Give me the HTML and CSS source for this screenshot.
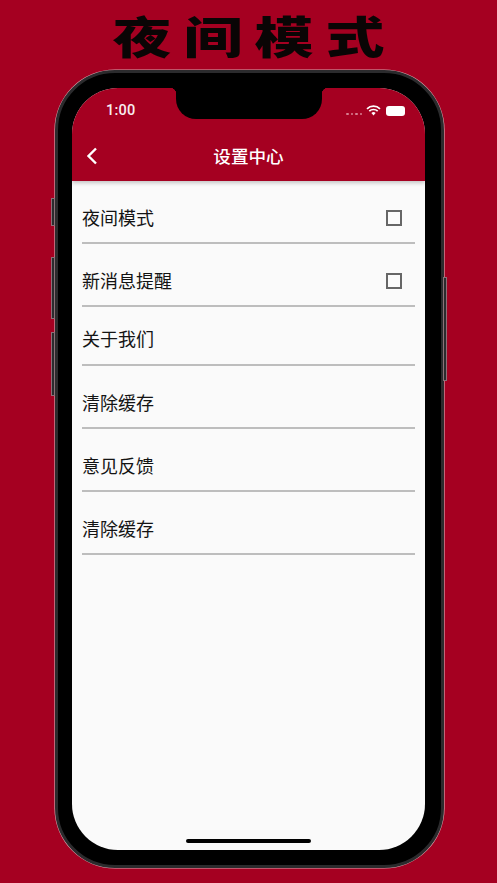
FILE: index.html
```html
<!DOCTYPE html>
<html lang="zh-CN">
<head>
<meta charset="utf-8">
<title>夜间模式</title>
<link rel="stylesheet" href="styles.css">
</head>
<body>
<div class="headline"><h1 class="headline-text">夜间模式</h1></div>
<div class="phone">
  <span class="btn btn-mute"></span>
  <span class="btn btn-up"></span>
  <span class="btn btn-down"></span>
  <span class="btn btn-power"></span>
  <div class="screen">
    <div class="notch"></div>
    <header class="appbar">
      <div class="status">
        <span class="time">1:00</span>
        <span class="status-right">
          <span class="dots"><i></i><i></i><i></i><i></i></span>
          <svg class="wifi" width="15" height="11" viewBox="0 0 15 11"><path d="M1 3.9a9.2 9.2 0 0 1 13 0M3.3 6.2a6 6 0 0 1 8.4 0" fill="none" stroke="#fff" stroke-width="1.7"/><path d="M5.4 8a3 3 0 0 1 4.2 0L7.5 10.4z" fill="#fff"/></svg>
          <span class="battery"></span>
        </span>
      </div>
      <div class="nav">
        <svg class="back" width="12" height="18" viewBox="0 0 12 18"><path d="M10 1.5 2.5 9l7.5 7.5" fill="none" stroke="#fff" stroke-width="2.4"/></svg>
        <span class="title">设置中心</span>
      </div>
    </header>
    <ul class="list">
      <li class="row tall"><span>夜间模式</span><span class="check"></span></li>
      <li class="row tall"><span>新消息提醒</span><span class="check"></span></li>
      <li class="row short"><span>关于我们</span></li>
      <li class="row tall"><span>清除缓存</span></li>
      <li class="row tall"><span>意见反馈</span></li>
      <li class="row tall"><span>清除缓存</span></li>
    </ul>
    <div class="home"></div>
  </div>
</div>
</body>
</html>
```
FILE: styles.css
```css
* { box-sizing: border-box; }
html, body { margin: 0; padding: 0; }
body {
  width: 497px;
  height: 883px;
  overflow: hidden;
  background: #a50021;
  font-family: "Noto Sans CJK SC", "Noto Sans", sans-serif;
}
.headline {
  height: 70px;
  padding-top: 6px;
  display: flex;
  justify-content: center;
}
.headline-text {
  margin: 0;
  height: 58px;
  font-size: 44px;
  line-height: 58px;
  letter-spacing: 9px;
  padding-left: 9px;
  font-weight: 900;
  color: #0a0505;
  transform: scaleX(1.34);
}
.phone {
  position: relative;
  width: 389px;
  height: 798px;
  margin-left: 55px;
  padding: 18px 17px 18px 17px;
  background: #000;
  border-radius: 60px;
  border: 3px solid #2b2b2d;
  box-shadow: 0 0 0 .6px #d9a9b2;
}
.btn {
  position: absolute;
  width: 4px;
  background: #2b2b2d;
  border: 1px solid #8d7078;
}
.btn-mute { left: -7px; top: 125px; height: 28px; }
.btn-up { left: -7px; top: 184px; height: 62px; }
.btn-down { left: -7px; top: 259px; height: 64px; }
.btn-power { right: -6px; top: 204px; height: 104px; }
.screen {
  position: relative;
  width: 353px;
  height: 762px;
  margin: -3px 0 0 -3px;
  border-radius: 46px;
  overflow: hidden;
  background: #fafafa;
}
.notch {
  position: absolute;
  z-index: 2;
  left: 104px;
  top: 0;
  width: 146px;
  height: 31px;
  background: #000;
  border-radius: 0 0 20px 20px;
}
.notch::before,
.notch::after {
  content: "";
  position: absolute;
  top: 0;
  width: 6px;
  height: 6px;
}
.notch::before { left: -6px; background: radial-gradient(circle at 0 100%, transparent 6px, #000 6.5px); }
.notch::after { right: -6px; background: radial-gradient(circle at 100% 100%, transparent 6px, #000 6.5px); }
.appbar {
  height: 93px;
  background: #a50021;
  box-shadow: 0 2px 4px rgba(0, 0, 0, .22);
  position: relative;
}
.status {
  height: 48px;
  padding: 12px 20px 0 34px;
  display: flex;
  justify-content: space-between;
  align-items: flex-start;
  color: #f8eef0;
}
.time { font-family: Roboto, sans-serif; font-size: 14.5px; line-height: 21px; font-weight: 500; letter-spacing: .2px; }
.status-right { display: flex; align-items: center; gap: 4px; height: 20px; }
.dots { display: flex; gap: 2px; margin-top: 8px; }
.dots i { width: 2.5px; height: 2.5px; border-radius: 50%; background: #d77f90; }
.wifi { margin-top: 0; }
.battery { width: 19px; height: 10px; margin-top: 1px; background: #fff; border-radius: 3px; margin-left: 1px; }
.nav {
  position: relative;
  height: 45px;
  display: flex;
  align-items: flex-start;
  justify-content: center;
}
.back { position: absolute; left: 14px; top: 11px; }
.title {
  color: #fff;
  font-size: 17.6px;
  line-height: 40px;
  font-weight: 500;
}
.list { list-style: none; margin: 0; padding: 0 10px; }
.row {
  display: flex;
  justify-content: space-between;
  align-items: center;
  border-bottom: 2px solid #bdbdbd;
  font-size: 18px;
  color: #141414;
}
.tall { height: 63px; padding-top: 11px; }
.short { height: 59px; padding-top: 5px; }
.check {
  width: 16px;
  height: 16px;
  border: 2px solid #666;
  margin: 2px 13px 0 0;
}
.home {
  position: absolute;
  left: 114px;
  bottom: 7px;
  width: 125px;
  height: 4px;
  border-radius: 2px;
  background: #000;
}
```
